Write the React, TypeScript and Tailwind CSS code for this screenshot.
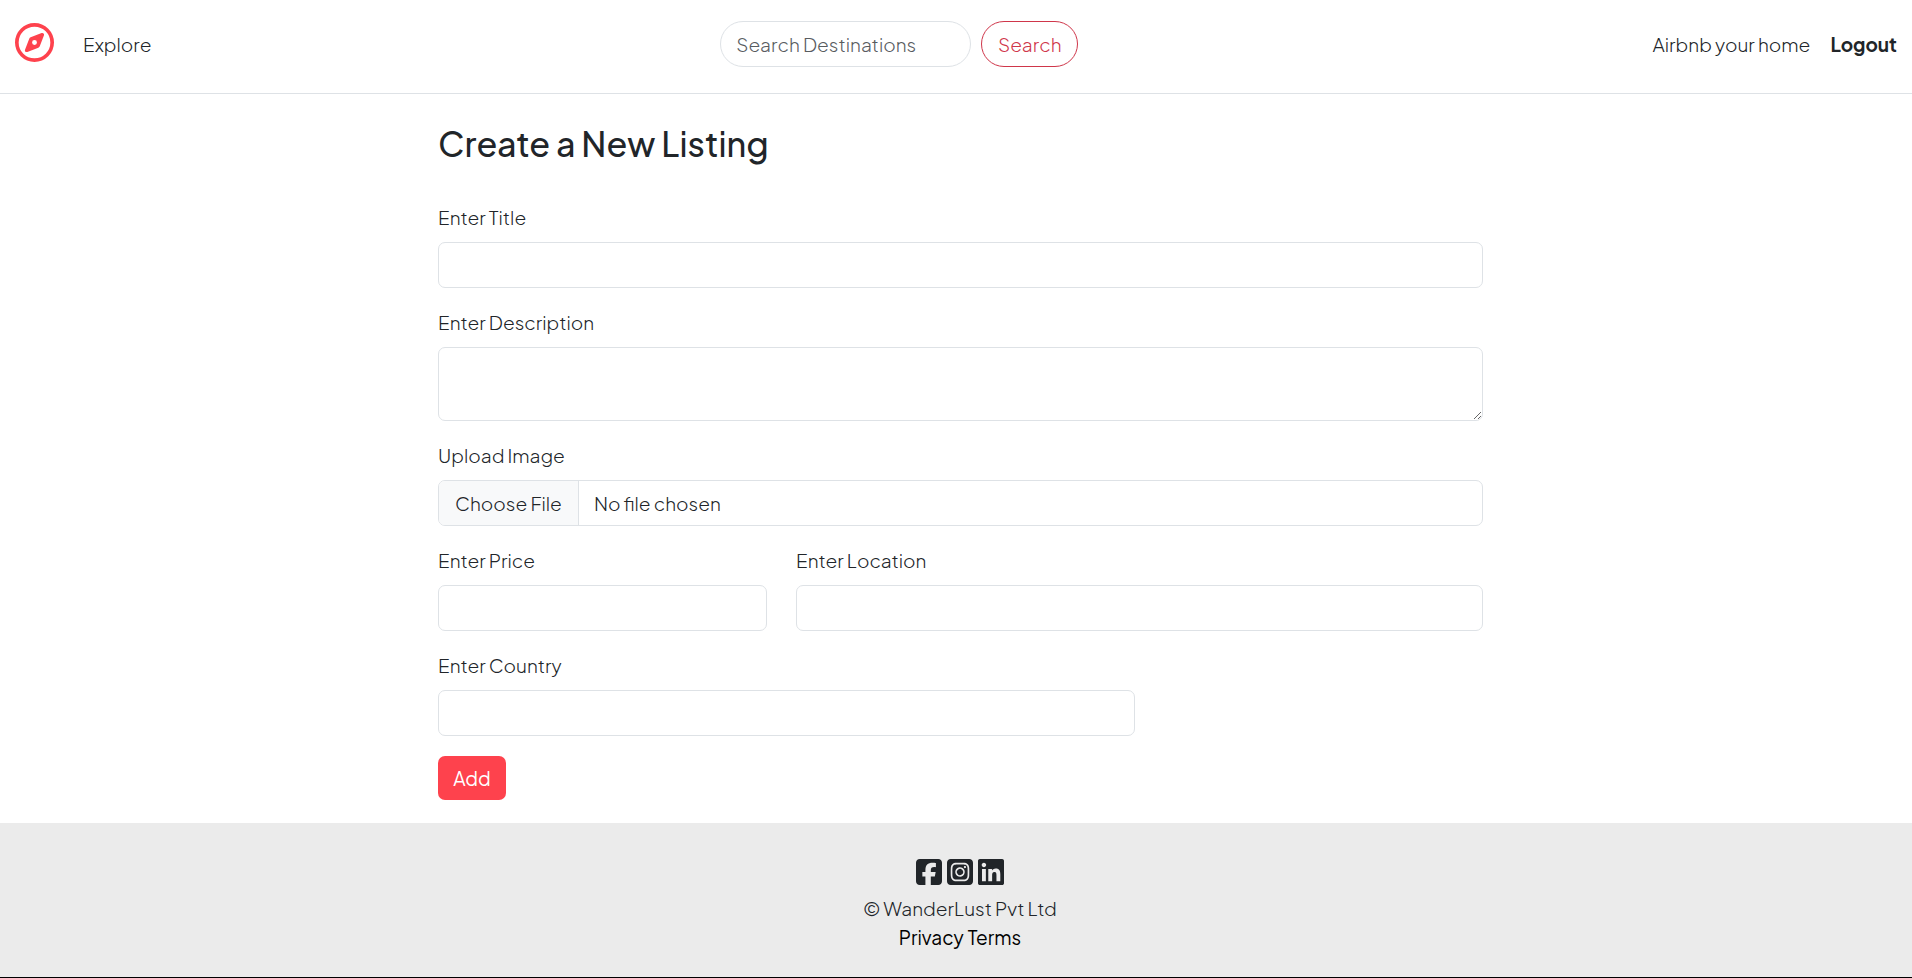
import React from "react";
import { FaLinkedin, FaRegCompass, FaSquareFacebook, FaSquareInstagram } from "react-icons/fa6";

const control =
  "block w-full rounded-[7px] border border-[#dee2e6] bg-white px-[15px] text-[19px] leading-[29px] outline-none focus:border-[#86b7fe]";

function Field({ id, label, className = "", children }: {
  id: string;
  label: string;
  className?: string;
  children: React.ReactNode;
}) {
  return (
    <div className={`mb-5 ${className}`}>
      <label htmlFor={id} className="mb-[10px] block">
        {label}
      </label>
      {children}
    </div>
  );
}

function Header() {
  return (
    <header className="border-b border-[#dee2e6] bg-white">
      <nav className="flex h-[93px] items-start px-[15px] pt-[21px]">
        <a href="#home" aria-label="WanderLust home" className="mt-[2px] text-[#fe424d]">
          <FaRegCompass className="size-[39px]" />
        </a>
        <a href="#explore" className="ml-[29px] leading-[46px]">
          Explore
        </a>
        <form className="mx-auto flex gap-[10px]" role="search" onSubmit={(e) => e.preventDefault()}>
          <input
            type="search"
            aria-label="Search Destinations"
            placeholder="Search Destinations"
            className="h-[46px] w-[251px] rounded-full border border-[#dee2e6] px-[15px] outline-none placeholder:text-[#585c5f]"
          />
          <button type="submit" className="h-[46px] w-[97px] rounded-full border border-[#cf364a] font-light text-[#cf364a]">
            Search
          </button>
        </form>
        <div className="flex min-w-[250px] justify-end gap-5 leading-[46px]">
          <a href="#host">Airbnb your home</a>
          <a href="#logout" className="font-bold">
            Logout
          </a>
        </div>
      </nav>
    </header>
  );
}

function ListingForm() {
  return (
    <main className="pr-4 pl-[25px]">
      <div className="mx-auto max-w-[1045px] pt-[29px] pb-[23px]">
        <h1 className="mb-[38px] text-[34px] leading-[42px] font-medium">Create a New Listing</h1>
        <form onSubmit={(e) => e.preventDefault()}>
          <Field id="title" label="Enter Title">
            <input id="title" type="text" className={`${control} h-[46px]`} />
          </Field>
          <Field id="description" label="Enter Description">
            <textarea id="description" className={`${control} h-[74px] resize-y py-[7px]`} />
          </Field>
          <Field id="image" label="Upload Image">
            <input
              id="image"
              type="file"
              className="block h-[46px] w-full overflow-hidden rounded-[7px] border border-[#dee2e6] bg-white leading-[44px] file:mr-[15px] file:h-[44px] file:border-r file:border-[#dee2e6] file:bg-[#f8f9fa] file:px-4 file:font-light"
            />
          </Field>
          <div className="grid grid-cols-3 gap-x-[29px]">
            <Field id="price" label="Enter Price">
              <input id="price" type="text" inputMode="numeric" className={`${control} h-[46px]`} />
            </Field>
            <Field id="location" label="Enter Location" className="col-span-2">
              <input id="location" type="text" className={`${control} h-[46px]`} />
            </Field>
          </div>
          <Field id="country" label="Enter Country" className="w-2/3">
            <input id="country" type="text" className={`${control} h-[46px]`} />
          </Field>
          <button type="submit" className="h-11 w-[68px] rounded-[7px] bg-[#fe424d] font-normal text-white">
            Add
          </button>
        </form>
      </div>
    </main>
  );
}

function Footer() {
  return (
    <footer className="flex h-[154px] flex-col items-center bg-[#ebebeb] pt-[34px] pl-2">
      <div className="flex gap-[5px]">
        <a href="#facebook" aria-label="Facebook">
          <FaSquareFacebook className="h-[30px] w-[26px]" />
        </a>
        <a href="#instagram" aria-label="Instagram">
          <FaSquareInstagram className="h-[30px] w-[26px]" />
        </a>
        <a href="#linkedin" aria-label="LinkedIn">
          <FaLinkedin className="h-[30px] w-[26px]" />
        </a>
      </div>
      <p className="mt-[7px]">© WanderLust Pvt Ltd</p>
      <div className="flex gap-1 font-normal text-black">
        <a href="#privacy">Privacy</a>
        <a href="#terms">Terms</a>
      </div>
    </footer>
  );
}

export default function App() {
  return (
    <div className="min-h-screen border-b border-black bg-white font-['Plus_Jakarta_Sans',Inter,sans-serif] text-[19px] leading-[29px] font-light text-[#212529]">
      <Header />
      <ListingForm />
      <Footer />
    </div>
  );
}
